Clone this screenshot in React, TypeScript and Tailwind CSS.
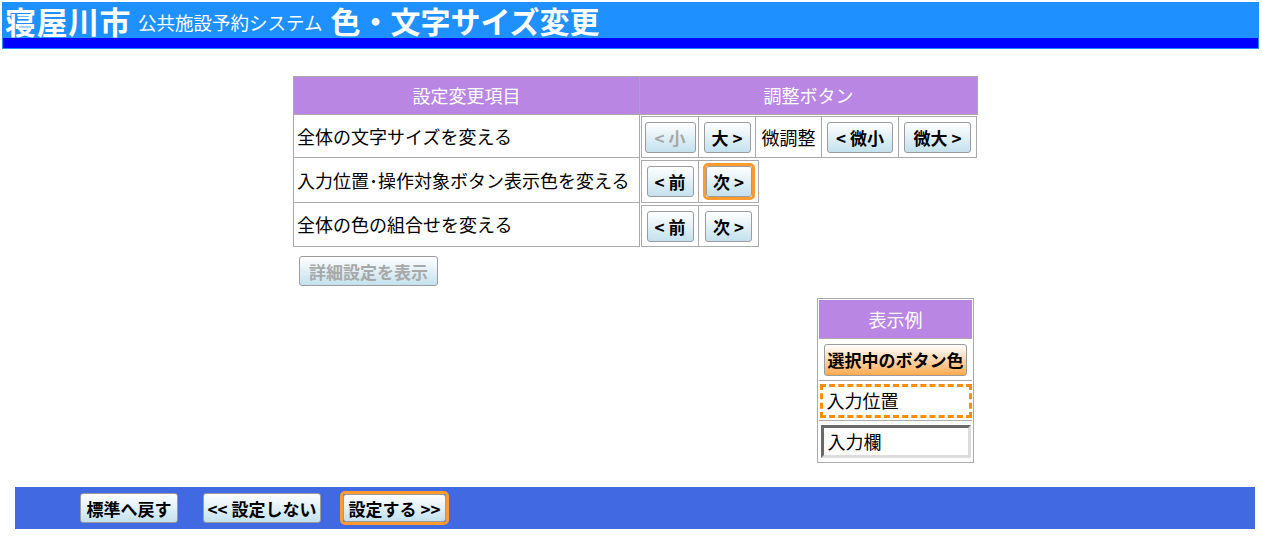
import type { ReactNode } from 'react'

const jp = "font-['Noto_Sans_CJK_JP','Noto_Sans',sans-serif]"

function Btn({
  children,
  disabled,
  active,
  orange,
  className = '',
}: {
  children: ReactNode
  disabled?: boolean
  active?: boolean
  orange?: boolean
  className?: string
}) {
  const face = (
    <span
      className={`inline-flex items-center justify-center rounded-[3px] border border-[#9c9c9c] bg-linear-to-b from-white ${
        orange ? 'to-[#ffaa4c]' : 'to-[#c3e1ed]'
      } text-[17px] font-bold leading-none whitespace-nowrap ${disabled ? 'text-[#a8a8a8]' : 'text-black'} ${className}`}
    >
      {children}
    </span>
  )
  if (!active) return face
  return <span className="inline-flex rounded-[5px] border-[3px] border-[#ff9a2e]">{face}</span>
}

function Cell({ w, children }: { w: string; children: ReactNode }) {
  return (
    <div className={`${w} -ml-px first:ml-0 h-full flex items-center justify-center border border-[#aaaaaa]`}>
      {children}
    </div>
  )
}

const rows = [
  { label: '全体の文字サイズを変える', h: 'h-[43px]' },
  { label: '入力位置･操作対象ボタン表示色を変える', h: 'h-[45px]' },
  { label: '全体の色の組合せを変える', h: 'h-[44px]' },
]

export default function App() {
  return (
    <div className={`w-[1262px] h-[536px] bg-white overflow-hidden ${jp}`}>
      {/* title bar */}
      <div className="ml-[2px] mt-[2px] w-[1257px] border border-[#1e90ff] bg-[#1e90ff]">
        <div className="h-[35px] flex items-center pl-[2px] text-white leading-[35px]">
          <span className="text-[31px] font-bold tracking-[0.5px]">寝屋川市</span>
          <span className="text-[18.5px] ml-[7px] mt-[4px]">公共施設予約システム</span>
          <span className="text-[30px] font-bold ml-[8px]">色・文字サイズ変更</span>
        </div>
        <div className="h-[10px] bg-[#0000ff]" />
      </div>

      <div className="pl-[293px] mt-[27px]">
        {/* settings table */}
        <div className="w-[686px]">
          <div className="flex h-[39px] text-white text-[18px]">
            <div className="w-[347px] flex items-center justify-center bg-[#b986e3] border border-[#aaaaaa]">
              設定変更項目
            </div>
            <div className="w-[339px] -ml-px flex items-center justify-center bg-[#b986e3] border border-[#aaaaaa]">
              調整ボタン
            </div>
          </div>

          {rows.map((r, i) => (
            <div key={i} className={`flex ${r.h}`}>
              <div className="w-[347px] flex items-center pl-[3px] border-x border-b border-[#aaaaaa] text-[18px] text-black whitespace-nowrap">
                {r.label}
              </div>
              <div className={`flex pl-[1px] ${i === 0 ? 'pt-[1px]' : 'pt-[2px]'}`}>
                {i === 0 ? (
                  <>
                    <Cell w="w-[58px]">
                      <Btn disabled className="w-[51px] h-[31px]">&lt; 小</Btn>
                    </Cell>
                    <Cell w="w-[58px]">
                      <Btn className="w-[47px] h-[31px]">大 &gt;</Btn>
                    </Cell>
                    <Cell w="w-[67px]">
                      <span className="text-[18px] text-black">微調整</span>
                    </Cell>
                    <Cell w="w-[78px]">
                      <Btn className="w-[66px] h-[31px]">&lt; 微小</Btn>
                    </Cell>
                    <Cell w="w-[79px]">
                      <Btn className="w-[67px] h-[31px]">微大 &gt;</Btn>
                    </Cell>
                  </>
                ) : (
                  <>
                    <Cell w="w-[58px]">
                      <Btn className="w-[47px] h-[31px]">&lt; 前</Btn>
                    </Cell>
                    <Cell w="w-[61px]">
                      {i === 1 ? (
                        <Btn active className="w-[46px] h-[31px]">次 &gt;</Btn>
                      ) : (
                        <Btn className="w-[47px] h-[31px]">次 &gt;</Btn>
                      )}
                    </Cell>
                  </>
                )}
              </div>
            </div>
          ))}
        </div>

        <div className="mt-[9px] ml-[6px]">
          <Btn disabled className="w-[139px] h-[30px] text-[17px]">詳細設定を表示</Btn>
        </div>

        {/* preview */}
        <div className="ml-[524px] mt-[12px] w-[157px] border border-[#aaaaaa] p-px">
          <div className="h-[38px] flex items-center justify-center bg-[#b986e3] text-white text-[18px]">表示例</div>
          <div className="h-[42px] border-t border-[#aaaaaa] flex items-center justify-center">
            <Btn orange className="w-[143px] h-[32px]">選択中のボタン色</Btn>
          </div>
          <div className="h-[40px] border-t border-[#aaaaaa] flex items-center justify-center">
            <div className="w-[152px] h-[34px] border-[3px] border-dashed border-[#ff8c00] flex items-center pl-[4px] text-[18px] text-black">
              入力位置
            </div>
          </div>
          <div className="h-[41px] border-t border-[#aaaaaa] flex items-center justify-center">
            <div className="w-[150px] h-[33px] border-[3px] border-t-[#6a6a6a] border-l-[#6a6a6a] border-b-[#dcdcdc] border-r-[#dcdcdc] bg-white flex items-center pl-[4px] text-[18px] text-black">
              入力欄
            </div>
          </div>
        </div>
      </div>

      {/* footer */}
      <div className="ml-[15px] mt-[24px] w-[1240px] h-[42px] bg-[#4169e1] flex items-center pl-[65px]">
        <Btn className="w-[98px] h-[30px]">標準へ戻す</Btn>
        <Btn className="ml-[25px] w-[118px] h-[30px]">&lt;&lt; 設定しない</Btn>
        <span className="ml-[19px]">
          <Btn active className="w-[103px] h-[28px]">設定する &gt;&gt;</Btn>
        </span>
      </div>
    </div>
  )
}
